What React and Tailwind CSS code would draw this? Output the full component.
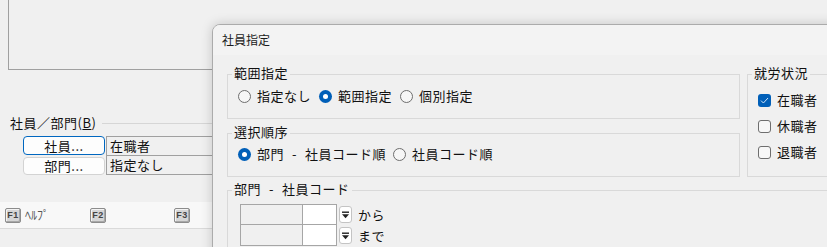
import React from "react";

function Radio({ checked, children }) {
  return (
    <div className="flex items-center gap-[6px] h-[20px]">
      {checked ? (
        <span className="w-[13px] h-[13px] rounded-full bg-[#005fb8] flex items-center justify-center">
          <span className="w-[5px] h-[5px] rounded-full bg-white" />
        </span>
      ) : (
        <span className="w-[13px] h-[13px] rounded-full border border-[#6e6e6e] bg-[#f6f6f6]" />
      )}
      <span>{children}</span>
    </div>
  );
}

function Check({ checked, children }) {
  return (
    <div className="flex items-center gap-[6px] h-[26px]">
      {checked ? (
        <span className="w-[13px] h-[13px] rounded-[3px] bg-[#005fb8] flex items-center justify-center">
          <svg width="9" height="7" viewBox="0 0 9 7">
            <path d="M1 3.6 L3.4 6 L8 1" fill="none" stroke="#cfe3f7" strokeWidth="1" />
          </svg>
        </span>
      ) : (
        <span className="w-[13px] h-[13px] rounded-[3px] border border-[#6e6e6e] bg-[#f7f7f7]" />
      )}
      <span>{children}</span>
    </div>
  );
}

function Group({ label, className, children }) {
  return (
    <div className={"relative border border-[#d9d9d9] " + className}>
      <span className="absolute left-[4px] top-[-10px] px-[2px] bg-[#f0f0f0] leading-[16px]">
        {label}
      </span>
      {children}
    </div>
  );
}

function Sep() {
  return <span className="inline-block w-[21px] text-center">-</span>;
}

function DropBtn() {
  return (
    <span className="ml-[2px] w-[13px] h-[17px] rounded-[3px] border border-[#c4c4c4] bg-white flex items-center justify-center">
      <svg width="9" height="8" viewBox="0 0 9 8">
        <rect x="1" y="0.5" width="7" height="1.4" fill="#222" />
        <polygon points="1,3.3 8,3.3 4.5,7.3" fill="#222" />
      </svg>
    </span>
  );
}

function Key({ label }) {
  return (
    <span className="w-[16px] h-[15px] rounded-[2px] border border-[#8c8c8c] bg-[#d6d6d6] flex items-center justify-center text-[9px] font-bold text-[#444] font-['Liberation_Sans',sans-serif] leading-none shadow-[inset_-1px_-1px_0_#a8a8a8,inset_1px_1px_0_#f4f4f4]">
      {label}
    </span>
  );
}

export default function App() {
  return (
    <div className="relative w-[827px] h-[247px] overflow-hidden bg-[#f0f0f0] text-[13px] tracking-[0.5px] leading-[16px] text-[#111] font-['Noto_Sans_CJK_JP',sans-serif]">
      {/* underlying window */}
      <div className="ml-[8px] w-[850px] h-[70px] border-l border-r border-b border-[#a0a0a0]" />

      <div className="mt-[45px] pl-[10px] flex items-center h-[16px]">
        <span>
          社員／部門(<span className="underline">B</span>)
        </span>
        <span className="ml-[6px] flex-1 h-px bg-[#d6d6d6]" />
      </div>

      <div className="mt-[5px] pl-[23px] flex">
        <div className="w-[82px] flex flex-col gap-[2px]">
          <div className="h-[19px] rounded-[4px] border border-[#0067c0] bg-[#fdfdfd] flex items-center justify-center">
            社員...
          </div>
          <div className="h-[18px] rounded-[4px] border border-[#d3d3d3] bg-[#fdfdfd] flex items-center justify-center">
            部門...
          </div>
        </div>
        <div className="ml-[1px] w-[200px] border border-[#a0a0a0]">
          <div className="h-[19px] border-b border-[#a0a0a0] pl-[3px] flex items-center">在職者</div>
          <div className="h-[18px] pl-[3px] flex items-center">指定なし</div>
        </div>
      </div>

      <div className="mt-[27px] h-[27px] bg-[#f8f8f8] border-b border-[#dadada] flex items-center pl-[5px]">
        <div className="w-[85px] flex items-center gap-[4px]">
          <Key label="F1" />
          <span className="text-[12px] text-[#555] tracking-normal">ﾍﾙﾌﾟ</span>
        </div>
        <div className="w-[84px] flex items-center">
          <Key label="F2" />
        </div>
        <div className="w-[84px] flex items-center">
          <Key label="F3" />
        </div>
      </div>

      {/* dialog window */}
      <div className="absolute left-[212px] top-[24px] w-[640px] h-[260px] bg-[#f0f0f0] border border-[#ababab] rounded-tl-[8px] overflow-hidden shadow-[0_0_12px_rgba(0,0,0,0.18)]">
        <div className="h-[30px] bg-[#f3f3f3] pl-[9px] flex items-center text-[12px] tracking-normal text-[#1b1b1b]">
          社員指定
        </div>
        <div className="pt-[19px] px-[14px]">
          <div className="flex">
            <div className="w-[513px] flex flex-col gap-[14px]">
              <Group label="範囲指定" className="h-[45px] pt-[11px] pl-[10px]">
                <div className="flex gap-[8px]">
                  <Radio>指定なし</Radio>
                  <Radio checked>範囲指定</Radio>
                  <Radio>個別指定</Radio>
                </div>
              </Group>
              <Group label="選択順序" className="h-[44px] pt-[10px] pl-[10px]">
                <div className="flex gap-[7px]">
                  <Radio checked>
                    部門<Sep />社員コード順
                  </Radio>
                  <Radio>社員コード順</Radio>
                </div>
              </Group>
            </div>
            <Group label="就労状況" className="ml-[7px] flex-1 pt-[12px] pl-[10px]">
              <Check checked>在職者</Check>
              <Check>休職者</Check>
              <Check>退職者</Check>
            </Group>
          </div>

          <Group
            label={
              <>
                部門<Sep />社員コード
              </>
            }
            className="mt-[13px] h-[80px] pt-[13px] pl-[12px]"
          >
            <div className="flex items-center">
              <div className="w-[63px] h-[21px] border-l border-t border-r border-b border-[#a6a6a6] bg-[#f0f0f0]" />
              <div className="w-[34px] h-[21px] border-t border-r border-b border-[#a6a6a6] bg-white" />
              <DropBtn />
              <span className="ml-[6px]">から</span>
            </div>
            <div className="flex items-center">
              <div className="w-[63px] h-[21px] border-l border-r border-b border-[#a6a6a6] bg-[#f0f0f0]" />
              <div className="w-[34px] h-[21px] border-r border-b border-[#a6a6a6] bg-white" />
              <DropBtn />
              <span className="ml-[6px]">まで</span>
            </div>
          </Group>
        </div>
      </div>
    </div>
  );
}
